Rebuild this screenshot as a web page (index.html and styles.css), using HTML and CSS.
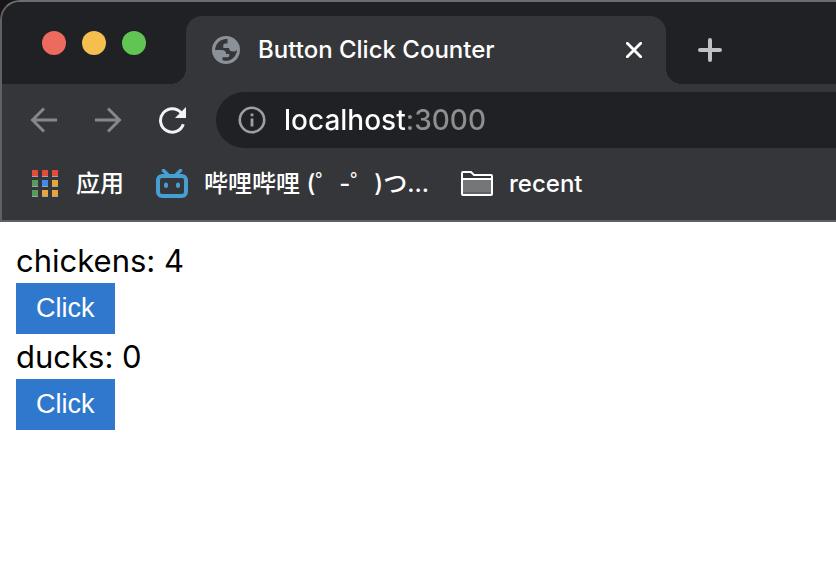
FILE: index.html
```html
<!DOCTYPE html>
<html lang="en">
<head>
<meta charset="utf-8">
<title>Button Click Counter</title>
<link rel="stylesheet" href="styles.css">
</head>
<body>
<div class="backdrop">
<header class="browser">
  <div class="tab-strip">
    <div class="window-controls">
      <button class="light light-close" aria-label="Close window"></button>
      <button class="light light-minimize" aria-label="Minimize window"></button>
      <button class="light light-zoom" aria-label="Zoom window"></button>
    </div>
    <div class="tab">
      <svg class="tab-icon" viewBox="0 0 28 28" aria-hidden="true">
        <circle cx="14" cy="14" r="14" fill="#8b9198"/>
        <path d="M15.500 3.100C9.500 2.500 4.500 6.200 3.200 12.500C3.100 13.500 3.100 14 3.100 14H9.500C12.500 14 14 15.200 14.200 18H17.300V19.500C17.300 20.800 16.500 21.300 15 21.300H10.500V24.300C17.500 26.600 24.800 21.500 25 13.500C24.300 15 23 15.500 21.300 15.500C18.500 15.500 17.200 14.500 17 12H11.300V9.500C11.300 8.300 12.200 7.500 13.300 7.500H15.500Z" fill="#35363a"/>
      </svg>
      <span class="tab-title">Button Click Counter</span>
      <button class="icon-button" aria-label="Close tab">
        <svg class="close-icon" viewBox="0 0 16 16" aria-hidden="true"><path d="M1.300 1.300L14.700 14.700M14.700 1.300L1.300 14.700" stroke="#fff" stroke-width="2.800" stroke-linecap="round"/></svg>
      </button>
    </div>
    <button class="icon-button new-tab" aria-label="New tab">
      <svg class="plus-icon" viewBox="0 0 24 24" aria-hidden="true"><path d="M12 2V22M2 12H22" stroke="#bec1c6" stroke-width="4" stroke-linecap="round"/></svg>
    </button>
  </div>
  <div class="toolbar">
    <button class="icon-button" aria-label="Back">
      <svg class="nav-icon" viewBox="0 0 28 28" fill="none" aria-hidden="true"><path d="M14 2.500L2.500 14L14 25.500M2.500 14H27" stroke="#87878a" stroke-width="3"/></svg>
    </button>
    <button class="icon-button" aria-label="Forward">
      <svg class="nav-icon" viewBox="0 0 28 28" fill="none" aria-hidden="true"><path d="M14 2.500L25.500 14L14 25.500M25.500 14H1" stroke="#87878a" stroke-width="3"/></svg>
    </button>
    <button class="icon-button" aria-label="Reload">
      <svg class="nav-icon" viewBox="0 0 28 28" aria-hidden="true"><path d="M25.300 18.200A11.700 11.700 0 1 1 23.300 7" fill="none" stroke="#f1f3f4" stroke-width="3"/><path d="M28 1V12H17Z" fill="#f1f3f4"/></svg>
    </button>
    <form class="address-bar">
      <svg class="info-icon" viewBox="0 0 28 28" aria-hidden="true"><circle cx="14" cy="14" r="12.200" fill="none" stroke="#9aa0a6" stroke-width="2.600"/><path d="M12.600 7.500H15.400V10.300H12.600ZM12.600 12.500H15.400V20.500H12.600Z" fill="#9aa0a6"/></svg>
      <input class="address-input" type="text" aria-label="Address" value="localhost:3000">
    </form>
  </div>
  <nav class="bookmarks" aria-label="Bookmarks">
    <a class="bookmark" href="#apps">
      <svg class="apps-icon" viewBox="0 0 26 28" aria-hidden="true">
        <path d="M0 6H6V7H0ZM10 6H16V7H10ZM20 6H26V7H20ZM0 16H6V17H0ZM10 16H16V17H10ZM20 16H26V17H20ZM0 26H6V27H0ZM10 26H16V27H10ZM20 26H26V27H20Z" fill="#a4a4a4"/>
        <path d="M0 0H6V6H0ZM10 0H16V6H10ZM20 0H26V6H20Z" fill="#e34b3d"/>
        <path d="M0 10H6V16H0ZM0 20H6V26H0Z" fill="#549b5d"/>
        <path d="M10 10H16V16H10Z" fill="#4289ed"/>
        <path d="M20 10H26V16H20ZM10 20H16V26H10ZM20 20H26V26H20Z" fill="#e7a63b"/>
      </svg>
      <span lang="zh">应用</span>
    </a>
    <a class="bookmark" href="#bilibili">
      <svg class="wide-icon" viewBox="0 0 32 30" fill="none" aria-hidden="true"><rect x="2" y="7" width="28" height="20" rx="4" stroke="#459fd3" stroke-width="4"/><path d="M7.500 1.500L12 6M24.500 1.500L20 6" stroke="#459fd3" stroke-width="3.500" stroke-linecap="round"/><path d="M10 15.500V17M22 15.500V17" stroke="#459fd3" stroke-width="4" stroke-linecap="round"/></svg>
      <span lang="zh">哔哩哔哩 (゜-゜)つ...</span>
    </a>
    <a class="bookmark" href="#recent">
      <svg class="wide-icon" viewBox="0 0 32 30" aria-hidden="true"><path d="M1 9.500H31V26H1Z" fill="#757678"/><path d="M2 23H30V25H2Z" fill="#606164"/><path d="M1 25V4Q1 3 2 3H10L13 6H30Q31 6 31 7V25Q31 26 30 26H2Q1 26 1 25ZM1 10H31" fill="none" stroke="#fff" stroke-width="2"/></svg>
      <span>recent</span>
    </a>
  </nav>
</header>
</div>
<main class="page">
  <div class="count">chickens: <output id="chickens">4</output></div>
  <button class="click-button" aria-describedby="chickens">Click</button>
  <div class="count">ducks: <output id="ducks">0</output></div>
  <button class="click-button" aria-describedby="ducks">Click</button>
</main>
</body>
</html>
```
FILE: styles.css
```css
* {
  box-sizing: border-box;
}

body {
  margin: 0;
  background: #fff;
  font-family: Inter, "Noto Sans CJK SC", sans-serif;
}

button {
  border: 0;
  padding: 0;
}

svg {
  display: block;
  flex: none;
}

.backdrop {
  background: #171416;
}

.browser {
  border: 2px solid #606065;
  border-top-color: #6c6d70;
  border-right: 0;
  border-top-left-radius: 20px;
  background: #35363a;
  color: #fff;
  font-weight: 500;
  overflow: hidden;
}

.tab-strip {
  display: flex;
  height: 82px;
  padding-top: 14px;
  background: #202124;
}

.window-controls {
  display: flex;
  gap: 16px;
  flex: none;
  width: 184px;
  padding: 15px 0 0 40px;
}

.light {
  width: 24px;
  height: 24px;
  border-radius: 50%;
}

.light-close {
  background: #ed6a5e;
}

.light-minimize {
  background: #f5bf4f;
}

.light-zoom {
  background: #61c554;
}

.tab {
  position: relative;
  display: flex;
  align-items: center;
  flex: 0 1 480px;
  padding: 0 24px 0 26px;
  border-radius: 16px 16px 0 0;
  background: #35363a;
}

.tab::before,
.tab::after {
  content: "";
  position: absolute;
  bottom: 0;
  width: 16px;
  height: 16px;
}

.tab::before {
  right: 100%;
  background: radial-gradient(circle at 0 0, #202124 16px, #35363a 16px);
}

.tab::after {
  left: 100%;
  background: radial-gradient(circle at 100% 0, #202124 16px, #35363a 16px);
}

.tab-icon,
.nav-icon,
.info-icon {
  width: 28px;
  height: 28px;
}

.tab-title {
  flex: 1;
  margin-left: 18px;
  font-size: 24px;
  line-height: 32px;
  white-space: nowrap;
}

.icon-button {
  flex: none;
  background: none;
}

.close-icon {
  width: 16px;
  height: 16px;
}

.plus-icon {
  width: 24px;
  height: 24px;
}

.new-tab {
  margin-left: 32px;
}

.toolbar {
  display: flex;
  align-items: center;
  gap: 36px;
  padding: 8px 0 8px 28px;
}

.address-bar {
  display: flex;
  align-items: center;
  flex: 1;
  gap: 18px;
  height: 56px;
  margin-left: -6px;
  padding-left: 22px;
  border-radius: 28px 0 0 28px;
  background: #202124;
}

.address-input {
  flex: 1;
  min-width: 0;
  border: 0;
  padding: 0;
  outline: 0;
  background: linear-gradient(90deg, #fff 121px, #8f8f91 121px);
  background-clip: text;
  color: transparent;
  caret-color: #fff;
  font: 500 28px/40px Inter, sans-serif;
}

.bookmarks {
  display: flex;
  align-items: center;
  gap: 32px;
  height: 64px;
  padding: 0 0 8px 28px;
}

.bookmark {
  display: flex;
  align-items: center;
  gap: 16px;
  color: #fff;
  font-size: 24px;
  line-height: 32px;
  text-decoration: none;
  white-space: nowrap;
}

.apps-icon {
  width: 30px;
  height: 28px;
}

.wide-icon {
  width: 32px;
  height: 30px;
}

.page {
  padding: 16px;
}

.count {
  font-size: 31px;
  line-height: 45px;
}

.click-button {
  display: block;
  padding: 10px 20px;
  background: #3078ce;
  color: #fff;
  font: 27px/31px "Liberation Sans", Arial, sans-serif;
}
```
